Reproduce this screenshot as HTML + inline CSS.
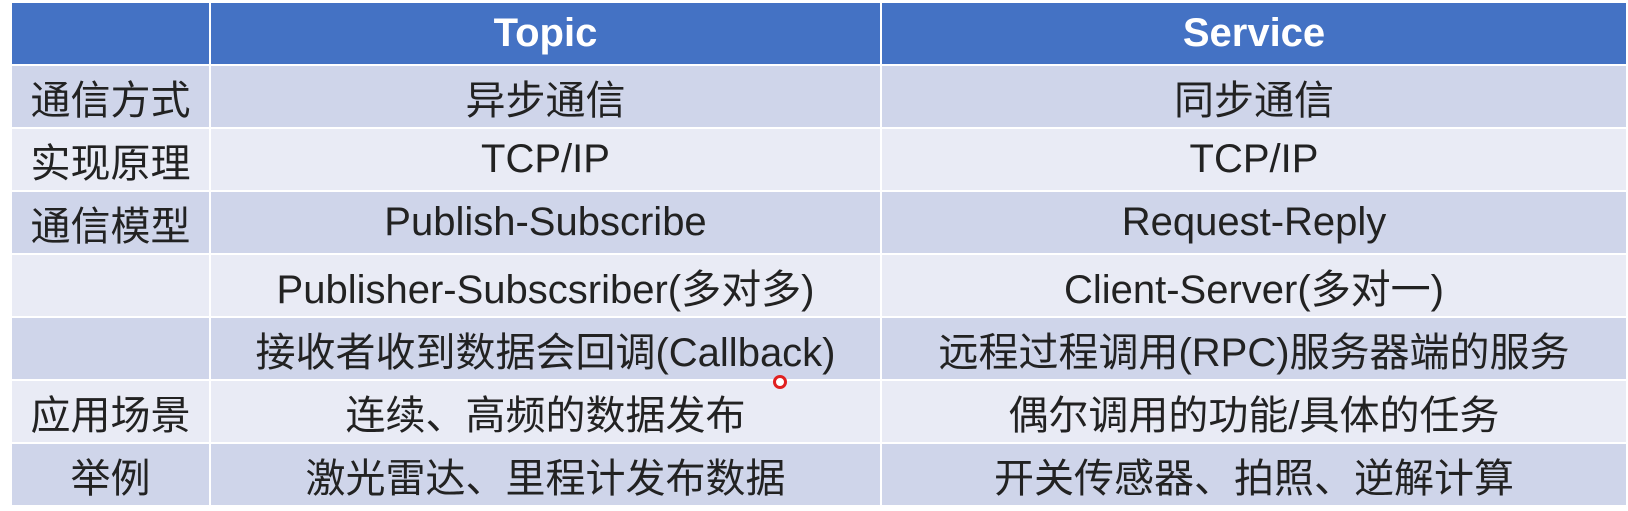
<!DOCTYPE html><html><head><style>
body{margin:0;background:#fff;width:1628px;height:511px;overflow:hidden}
table{position:absolute;left:10px;top:1px;border-collapse:collapse;table-layout:fixed;width:1616px;font-family:"Liberation Sans","Noto Sans CJK SC",sans-serif;font-size:40px;color:#222}
td{border:2px solid #fff;text-align:center;padding:0;white-space:nowrap}
tr{height:63px}
tr.h td{background:#4472c4;color:#fff;font-weight:bold}
tr.d td{background:#cfd5ea}
tr.l td{background:#e9ebf5}
.dot{position:absolute;left:773px;top:375px;width:8px;height:8px;border-radius:50%;background:#fff;border:3px solid #e02020}
</style></head><body>
<table>
<colgroup><col style="width:199px"><col style="width:671px"><col style="width:746px"></colgroup>
<tr class="h"><td></td><td>Topic</td><td>Service</td></tr>
<tr class="d"><td>通信方式</td><td>异步通信</td><td>同步通信</td></tr>
<tr class="l"><td>实现原理</td><td>TCP/IP</td><td>TCP/IP</td></tr>
<tr class="d"><td>通信模型</td><td>Publish-Subscribe</td><td>Request-Reply</td></tr>
<tr class="l"><td></td><td>Publisher-Subscsriber(多对多)</td><td>Client-Server(多对一)</td></tr>
<tr class="d"><td></td><td>接收者收到数据会回调(Callback)</td><td>远程过程调用(RPC)服务器端的服务</td></tr>
<tr class="l"><td>应用场景</td><td>连续、高频的数据发布</td><td>偶尔调用的功能/具体的任务</td></tr>
<tr class="d"><td>举例</td><td>激光雷达、里程计发布数据</td><td>开关传感器、拍照、逆解计算</td></tr>
</table>
<div class="dot"></div>
</body></html>
